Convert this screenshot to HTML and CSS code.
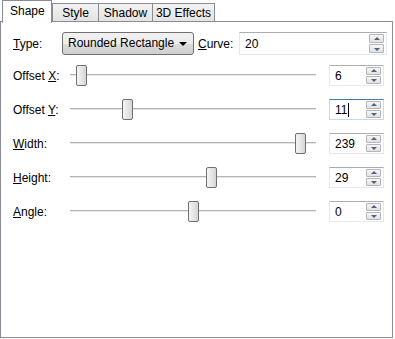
FILE: index.html
```html
<!DOCTYPE html>
<html lang="en">
<head>
    <meta charset="UTF-8">
    <title>Shape</title>
    <link rel="stylesheet" href="styles.css">
</head>
<body>
    <div class="tabs">
        <div class="tab active">Shape</div>
        <div class="tab">Style</div>
        <div class="tab">Shadow</div>
        <div class="tab">3D Effects</div>
    </div>
    <div class="panel">
        <div class="row-top">
            <span class="label-type"><u>T</u>ype:</span>
            <div class="combo">Rounded Rectangle<span class="combo-arrow"></span></div>
            <span class="label-curve"><u>C</u>urve:</span>
            <div class="spin wide">
                <span class="spin-text">20</span>
                <div class="spin-btns"><span class="up"></span><span class="down"></span></div>
            </div>
        </div>

        <div class="row">
            <span class="label">Offset <u>X</u>:</span>
            <div class="slider"><div class="track"></div><div class="thumb" style="left: 6px"></div></div>
            <div class="spin">
                <span class="spin-text">6</span>
                <div class="spin-btns"><span class="up"></span><span class="down"></span></div>
            </div>
        </div>
        <div class="row">
            <span class="label">Offset <u>Y</u>:</span>
            <div class="slider"><div class="track"></div><div class="thumb" style="left: 52px"></div></div>
            <div class="spin focus">
                <span class="spin-text">11<span class="caret"></span></span>
                <div class="spin-btns"><span class="up"></span><span class="down"></span></div>
            </div>
        </div>
        <div class="row">
            <span class="label"><u>W</u>idth:</span>
            <div class="slider"><div class="track"></div><div class="thumb" style="left: 225px"></div></div>
            <div class="spin">
                <span class="spin-text">239</span>
                <div class="spin-btns"><span class="up"></span><span class="down"></span></div>
            </div>
        </div>
        <div class="row">
            <span class="label"><u>H</u>eight:</span>
            <div class="slider"><div class="track"></div><div class="thumb" style="left: 136px"></div></div>
            <div class="spin">
                <span class="spin-text">29</span>
                <div class="spin-btns"><span class="up"></span><span class="down"></span></div>
            </div>
        </div>
        <div class="row">
            <span class="label"><u>A</u>ngle:</span>
            <div class="slider"><div class="track"></div><div class="thumb" style="left: 118px"></div></div>
            <div class="spin">
                <span class="spin-text">0</span>
                <div class="spin-btns"><span class="up"></span><span class="down"></span></div>
            </div>
        </div>
    </div>
</body>
</html>
```

FILE: styles.css
```css
body {
    margin: 0;
    background: #ffffff;
    font-family: "Liberation Sans", Arial, sans-serif;
    font-size: 12px;
    color: #000;
}
.tabs {
    display: flex;
    align-items: flex-end;
    height: 21px;
    padding-left: 2px;
    position: relative;
    z-index: 1;
}
.tab {
    height: 18px;
    line-height: 18px;
    padding: 0;
    text-align: center;
    white-space: nowrap;
    border: 1px solid #898c95;
    border-bottom: none;
    margin-left: -1px;
    background: linear-gradient(#f3f3f3, #e3e3e3);
    box-sizing: border-box;
}
.tab:nth-child(2) { width: 47px; }
.tab:nth-child(3) { width: 55px; }
.tab:nth-child(4) { width: 63px; }
.tab.active {
    width: 50px;
    height: 23px;
    line-height: 21px;
    margin-left: 0;
    margin-bottom: -2px;
    background: #ffffff;
    text-align: left;
    padding-left: 7px;
}
.tab.active + .tab {
    margin-left: 0;
}
.panel {
    width: 393px;
    height: 317px;
    box-sizing: border-box;
    border: 1px solid #898c95;
    padding: 10px 0 0 11px;
}
.row-top {
    display: flex;
    align-items: center;
    height: 23px;
    margin-bottom: 10px;
}
.label-type {
    width: 49px;
    padding-left: 1px;
}
.combo {
    position: relative;
    width: 132px;
    height: 23px;
    line-height: 21px;
    box-sizing: border-box;
    border: 1px solid #707070;
    border-radius: 3px;
    background: linear-gradient(#f2f2f2 0%, #ebebeb 50%, #dddddd 51%, #cfcfcf 100%);
    padding-left: 5px;
}
.combo-arrow {
    position: absolute;
    right: 6px;
    top: 9px;
    border-left: 4px solid transparent;
    border-right: 4px solid transparent;
    border-top: 4px solid #000;
}
.label-curve {
    margin-left: 4px;
    width: 41px;
}
.spin {
    position: relative;
    width: 55px;
    height: 21px;
    box-sizing: border-box;
    border: 1px solid #e3e9ef;
    border-top-color: #abadb3;
    background: #fff;
}
.spin.wide {
    width: 148px;
    height: 23px;
}
.spin.focus {
    border-color: #c5daed;
    border-top-color: #3d7bad;
}
.spin-text {
    position: absolute;
    left: 5px;
    top: 3px;
    line-height: 14px;
}
.spin.wide .spin-text {
    top: 4px;
}
.caret {
    display: inline-block;
    width: 1px;
    height: 14px;
    background: #000;
    vertical-align: top;
    margin-left: 1px;
}
.spin-btns {
    position: absolute;
    right: 2px;
    top: 1px;
    bottom: 1px;
    width: 15px;
    display: flex;
    flex-direction: column;
    gap: 1px;
}
.spin-btns span {
    flex: 1;
    position: relative;
    border: 1px solid #b6b6b6;
    border-radius: 1px;
    background: linear-gradient(#f6f6f6, #e1e1e1);
}
.spin-btns .up::after,
.spin-btns .down::after {
    content: "";
    position: absolute;
    left: 50%;
    top: 50%;
    margin-left: -3px;
    border-left: 3px solid transparent;
    border-right: 3px solid transparent;
}
.spin-btns .up::after {
    margin-top: -2px;
    border-bottom: 3px solid #4d6185;
}
.spin-btns .down::after {
    margin-top: -1px;
    border-top: 3px solid #4d6185;
}
.row {
    display: flex;
    align-items: center;
    height: 21px;
    margin-bottom: 13px;
}
.label {
    width: 57px;
    padding-left: 1px;
    white-space: nowrap;
}
.slider {
    position: relative;
    width: 246px;
    height: 21px;
    margin-right: 13px;
}
.track {
    position: absolute;
    left: 0;
    right: 0;
    top: 9px;
    height: 1px;
    background: #b4b4b4;
    border-bottom: 1px solid #e6e6e6;
}
.thumb {
    position: absolute;
    top: 0;
    width: 11px;
    height: 21px;
    box-sizing: border-box;
    border: 1px solid #707070;
    border-radius: 2px;
    background: linear-gradient(90deg, #f4f4f4, #e3e3e3 60%, #d4d4d4);
}
```
